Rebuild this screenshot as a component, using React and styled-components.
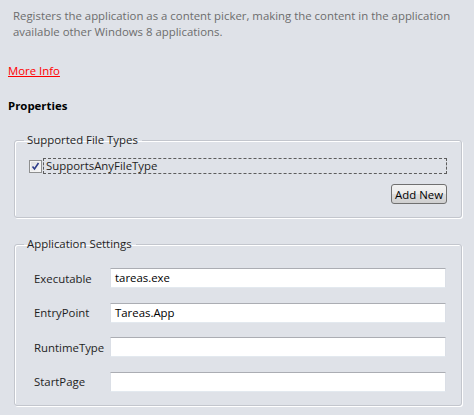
import React from 'react';
import styled, { createGlobalStyle } from 'styled-components';

const GlobalStyle = createGlobalStyle`
    html, body {
        margin: 0;
        padding: 0;
        background-color: #dfe2e8;
    }
    body {
        font-family: "Segoe UI", "Open Sans", "Noto Sans", sans-serif;
        font-size: 11.4px;
        color: #1e1e1e;
    }
`

const Page = styled.div`
    width: 474px;
    height: 415px;
    overflow: hidden;
    padding-top: 8px;
    box-sizing: border-box;
`

const Description = styled.p`
    margin: 0;
    padding-left: 13px;
    color: #6d6d6d;
    line-height: 16px;
`

const MoreInfo = styled.a`
    display: inline-block;
    margin: 23px 0 0 8px;
    line-height: 16px;
    color: #ff0000;
    text-decoration: underline;
    cursor: pointer;
`

const SectionTitle = styled.h4`
    margin: 19px 0 0 8px;
    font-size: 11.4px;
    line-height: 16px;
    font-weight: bold;
    color: #000;
`

const Group = styled.fieldset`
    margin: ${p => p.$top}px 12px 0 14px;
    padding: 0;
    border: 1px solid #c3c6cd;
    border-radius: 3px;
    box-shadow: inset 1px 1px 0 #fff, 1px 1px 0 #fff;
`

const Legend = styled.legend`
    margin-left: 9px;
    padding: 0 4px 0 3px;
    line-height: 16px;
    color: #1e1e1e;
`

const GroupBody = styled.div`
    padding: 0 ${p => p.$right}px 13px ${p => p.$left}px;
`

const CheckRow = styled.div`
    display: flex;
    align-items: center;
    margin-top: 10px;
`

const Box = styled.span`
    width: 13px;
    height: 13px;
    box-sizing: border-box;
    border: 1px solid #8e8f8f;
    background: linear-gradient(135deg, #dcdcdc, #fbfbfb);
    box-shadow: inset 0 0 0 1px #f4f4f4;
    display: flex;
    align-items: center;
    justify-content: center;
    flex: none;
`

const FocusLabel = styled.span`
    flex: 1;
    margin-left: 1px;
    padding: 0 2px;
    border: 1px dashed #5c5c5c;
    line-height: 14px;
    color: #1e1e1e;
`

const ButtonRow = styled.div`
    display: flex;
    justify-content: flex-end;
    margin-top: 10px;
`

const Button = styled.button`
    height: 20px;
    padding: 0 3px;
    font: inherit;
    color: #000;
    border: 1px solid #707070;
    border-radius: 3px;
    background: linear-gradient(#f2f2f2, #ebebeb 50%, #dddddd 51%, #cfcfcf);
`

const Rows = styled.div`
    display: flex;
    flex-direction: column;
    gap: 14.5px;
    margin-top: 16px;
`

const Row = styled.div`
    display: flex;
    align-items: center;
`

const Label = styled.span`
    width: 76px;
    flex: none;
`

const TextBox = styled.div`
    flex: 1;
    height: 20px;
    box-sizing: border-box;
    background: #fff;
    border: 1px solid #e3e9ef;
    border-top-color: #abadb3;
    border-left-color: #dbdfe6;
    border-right-color: #dbdfe6;
    padding-left: 4px;
    line-height: 18px;
    color: #000;
`

const CheckMark = () => (
    <svg width="9" height="9" viewBox="0 0 9 9">
        <path d="M1.5 4.5 L3.5 7 L7.5 1" fill="none" stroke="#2d3c8a" strokeWidth="1.6" />
    </svg>
)

const settings = [
    { name: 'Executable', value: 'tareas.exe' },
    { name: 'EntryPoint', value: 'Tareas.App' },
    { name: 'RuntimeType', value: '' },
    { name: 'StartPage', value: '' },
]

export default function App() {
    return (
        <Page>
            <GlobalStyle />
            <Description>
                Registers the application as a content picker, making the content in the application
                <br />
                available other Windows 8 applications.
            </Description>
            <MoreInfo>More Info</MoreInfo>
            <SectionTitle>Properties</SectionTitle>
            <Group $top={18}>
                <Legend>Supported File Types</Legend>
                <GroupBody $left={14} $right={14}>
                    <CheckRow>
                        <Box><CheckMark /></Box>
                        <FocusLabel>SupportsAnyFileType</FocusLabel>
                    </CheckRow>
                    <ButtonRow>
                        <Button>Add New</Button>
                    </ButtonRow>
                </GroupBody>
            </Group>
            <Group $top={18}>
                <Legend>Application Settings</Legend>
                <GroupBody $left={19} $right={15}>
                    <Rows>
                        {settings.map(s => (
                            <Row key={s.name}>
                                <Label>{s.name}</Label>
                                <TextBox>{s.value}</TextBox>
                            </Row>
                        ))}
                    </Rows>
                </GroupBody>
            </Group>
        </Page>
    )
}
